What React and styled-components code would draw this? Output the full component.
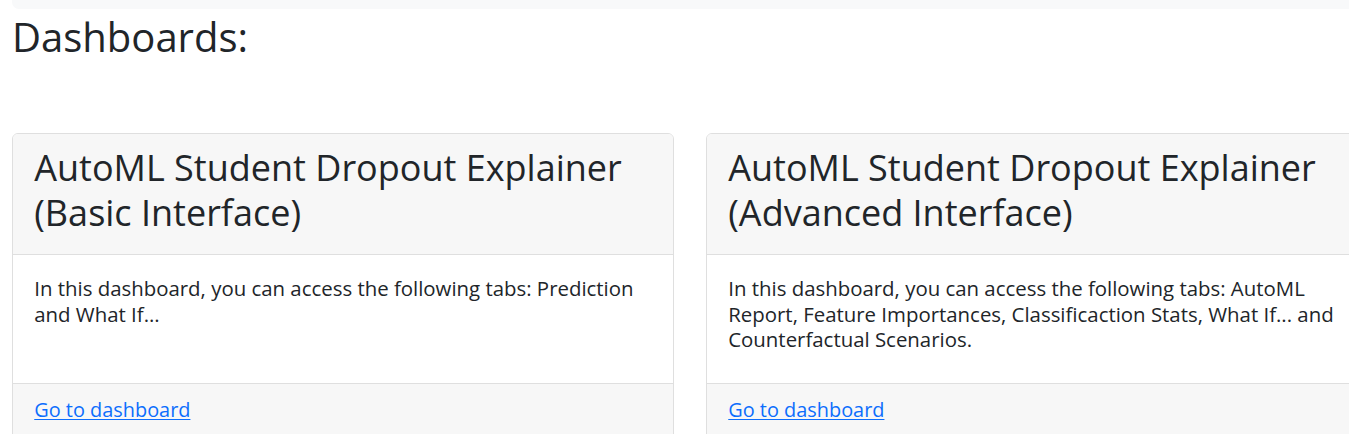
import React from "react";
import styled, { createGlobalStyle } from "styled-components";

const GlobalStyle = createGlobalStyle`
  html, body { margin: 0; padding: 0; background: #fff; }
  body {
    font-family: "Open Sans", "Noto Sans", sans-serif;
    color: #212529;
    overflow: hidden;
  }
`;

const Page = styled.div`
  padding: 0 0 0 12px;
  width: 1400px;
`;

const TopBar = styled.div`
  height: 9px;
  background: #f8f9fa;
  border-radius: 0 0 7px 7px;
`;

const Heading = styled.h1`
  margin: 4px 0 0 0;
  font-size: 40px;
  font-weight: 500;
  line-height: 48px;
  color: #212529;
`;

const CardRow = styled.div`
  display: flex;
  align-items: stretch;
  gap: 32px;
  margin-top: 72px;
`;

const Card = styled.div`
  width: 662px;
  box-sizing: border-box;
  display: flex;
  flex-direction: column;
  border: 1px solid #dfdfdf;
  border-radius: 6px;
  background: #fff;
  overflow: hidden;
`;

const CardHeader = styled.div`
  background: #f7f7f7;
  border-bottom: 1px solid #dfdfdf;
  padding: 10.5px 21.25px 19.5px;
`;

const CardTitle = styled.h2`
  margin: 0;
  font-size: 36px;
  font-weight: 400;
  line-height: 45px;
  color: #212529;
`;

const CardBody = styled.div`
  flex: 1;
  padding: 21.25px 21.25px 29.75px;
`;

const CardText = styled.h5`
  margin: 0;
  font-size: 20.4px;
  font-weight: 500;
  line-height: 25.5px;
  color: #212529;
`;

const CardFooter = styled.div`
  background: #f7f7f7;
  border-top: 1px solid #dfdfdf;
  padding: 13.75px 21.25px 12.75px;
  height: 60px;
`;

const DashLink = styled.a`
  font-size: 19.9px;
  line-height: 25.5px;
  color: #0d6efd;
  text-decoration: underline;
  text-underline-offset: 2px;
`;

const dashboards = [
  {
    title: "AutoML Student Dropout Explainer (Basic Interface)",
    text: "In this dashboard, you can access the following tabs: Prediction and What If...",
  },
  {
    title: "AutoML Student Dropout Explainer (Advanced Interface)",
    text: "In this dashboard, you can access the following tabs: AutoML Report, Feature Importances, Classificaction Stats, What If... and Counterfactual Scenarios.",
  },
];

export default function App() {
  return (
    <>
      <GlobalStyle />
      <Page>
        <TopBar />
        <Heading>Dashboards:</Heading>
        <CardRow>
          {dashboards.map((d) => (
            <Card key={d.title}>
              <CardHeader>
                <CardTitle>{d.title}</CardTitle>
              </CardHeader>
              <CardBody>
                <CardText>{d.text}</CardText>
              </CardBody>
              <CardFooter>
                <DashLink href="#">Go to dashboard</DashLink>
              </CardFooter>
            </Card>
          ))}
        </CardRow>
      </Page>
    </>
  );
}
